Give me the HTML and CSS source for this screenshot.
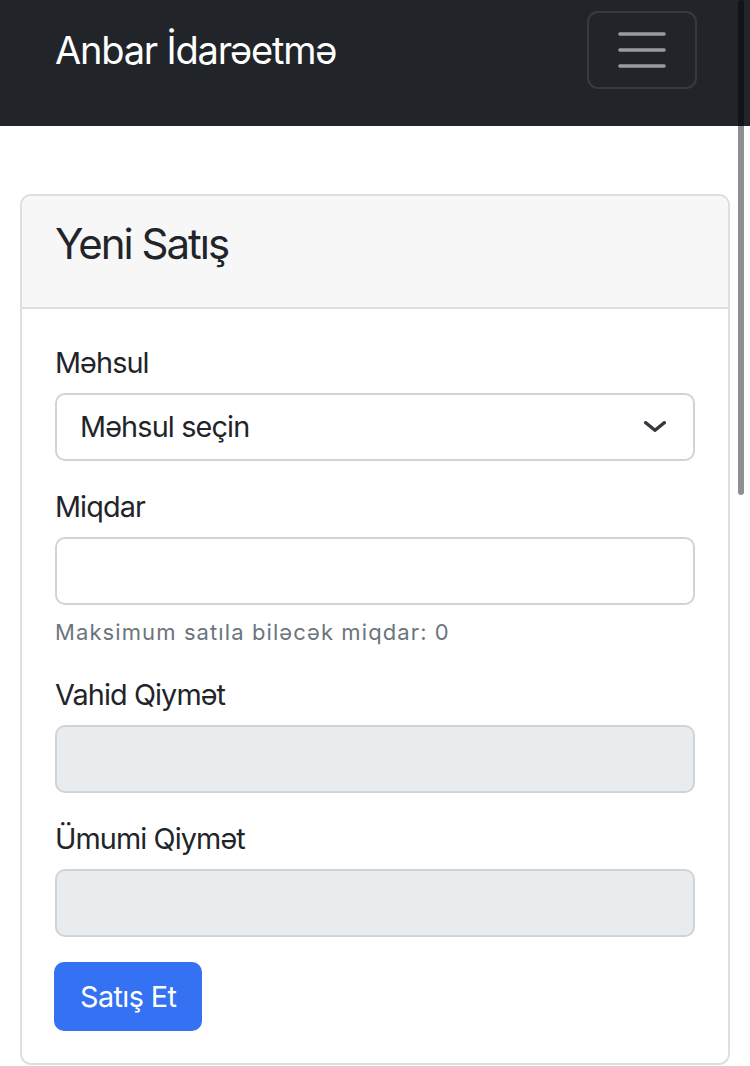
FILE: index.html
```html
<!DOCTYPE html>
<html lang="az">
<head>
<meta charset="utf-8">
<title>Anbar İdarəetmə</title>
<link rel="stylesheet" href="styles.css">
</head>
<body>
<nav class="navbar">
  <a class="brand" href="#">Anbar İdarəetmə</a>
  <button class="toggler" type="button" aria-label="Menu">
    <svg width="60" height="60" viewBox="0 0 60 60" aria-hidden="true">
      <path d="M8 14h44M8 30h44M8 46h44" stroke="rgba(255,255,255,0.55)" stroke-width="3.6" stroke-linecap="round" fill="none"/>
    </svg>
  </button>
</nav>
<main class="container">
  <div class="card">
    <div class="card-header">
      <h4 class="card-title">Yeni Satış</h4>
    </div>
    <div class="card-body">
      <form class="form">
        <div class="group">
          <label class="label">Məhsul</label>
          <div class="select">
            <span>Məhsul seçin</span>
            <svg width="22" height="11" viewBox="0 0 22 11" aria-hidden="true">
              <polyline points="1.75,1.75 11,9.25 20.25,1.75" fill="none" stroke="#343a40" stroke-width="3.5" stroke-linecap="round" stroke-linejoin="round"/>
            </svg>
          </div>
        </div>
        <div class="group">
          <label class="label">Miqdar</label>
          <input class="input" type="text">
          <div class="help">Maksimum satıla biləcək miqdar: 0</div>
        </div>
        <div class="group">
          <label class="label">Vahid Qiymət</label>
          <input class="input readonly" type="text" readonly>
        </div>
        <div class="group last">
          <label class="label">Ümumi Qiymət</label>
          <input class="input readonly" type="text" readonly>
        </div>
        <button class="btn" type="button">Satış Et</button>
      </form>
    </div>
  </div>
</main>
<div class="scroll-indicator"></div>
</body>
</html>
```
FILE: styles.css
```css
* { box-sizing: border-box; }

body {
  margin: 0;
  font-family: Inter, "Liberation Sans", sans-serif;
  color: #212529;
  background: #fff;
}

.navbar {
  display: flex;
  align-items: center;
  justify-content: space-between;
  background: #212529;
  height: 126px;
  padding: 0 53px 26px 55px;
}

.brand {
  font-size: 38px;
  line-height: 1.5;
  letter-spacing: -1.2px;
  color: #fff;
  text-decoration: none;
}

.toggler {
  width: 110px;
  height: 78px;
  border: 2px solid rgba(255, 255, 255, 0.1);
  border-radius: 11px;
  background: transparent;
  padding: 0;
  display: flex;
  align-items: center;
  justify-content: center;
}

.toggler svg { display: block; }

.container {
  padding: 68px 20px 0;
}

.card {
  border: 2px solid #dfdfdf;
  border-radius: 11px;
  overflow: hidden;
}

.card-header {
  background: #f7f7f7;
  border-bottom: 2px solid #dfdfdf;
  padding: 22px 33px 37px;
}

.card-title {
  margin: 0;
  font-size: 42px;
  line-height: 1.23;
  letter-spacing: -2px;
  font-weight: 400;
}

.card-body {
  padding: 32px 33px;
}

.form { margin: 0; }

.group { margin-bottom: 24px; }
.group.last { margin-bottom: 25px; }

.label {
  display: block;
  font-size: 28.8px;
  line-height: 1.5;
  letter-spacing: -0.9px;
  margin-bottom: 9px;
}

.input,
.select {
  display: block;
  width: 100%;
  height: 68px;
  border: 2px solid #ced4da;
  border-radius: 10px;
  background: #fff;
  font-family: inherit;
  font-size: 28.8px;
  letter-spacing: -0.85px;
  color: #212529;
  margin: 0;
}

.select {
  display: flex;
  align-items: center;
  justify-content: space-between;
  padding: 0 27px 0 23px;
}

.select svg { display: block; }

.input.readonly { background: #e9ecef; }

.help {
  margin-top: 10.5px;
  font-size: 22px;
  line-height: 1.5;
  letter-spacing: 1.1px;
  color: #6c757d;
}

.btn {
  display: block;
  height: 69px;
  margin-left: -1px;
  padding: 0 26px;
  border: 0;
  border-radius: 10px;
  background: #3571f3;
  color: #fff;
  font-family: inherit;
  font-size: 28.8px;
  line-height: 1.5;
  letter-spacing: -0.6px;
}

.scroll-indicator {
  position: absolute;
  top: 0;
  right: 6px;
  width: 6px;
  height: 495px;
  border-radius: 3px;
  background: rgba(0, 0, 0, 0.44);
}
```
